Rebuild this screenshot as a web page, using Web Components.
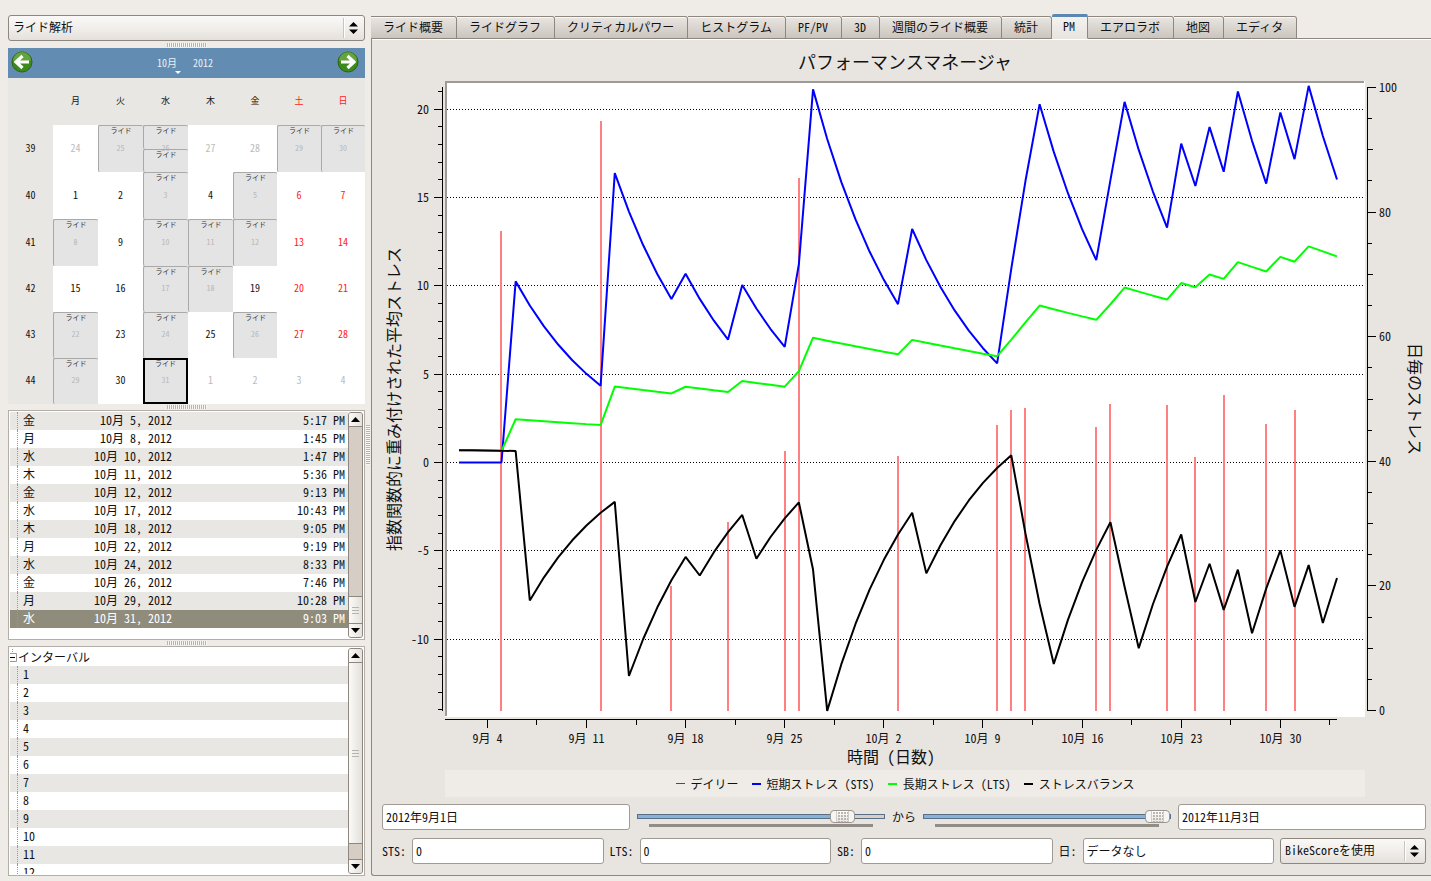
<!DOCTYPE html>
<html lang="ja">
<head>
<meta charset="utf-8">
<title>パフォーマンスマネージャ</title>
<style>
  html, body { margin: 0; height: 100%; }
  body {
    background: #efebe7;
    color: #111;
    font: 12px/18px "Noto Sans CJK JP", sans-serif;
    font-feature-settings: "hwid" 1;
    --edge: #8e8780;
    --soft-edge: #b3aea7;
    --stripe: #e8e7e3;
    --pane: #e8e4e0;
    --blue: #628cb2;
    --select: #908c7c;
  }
</style>
</head>
<body>
<ride-app></ride-app>

<script>
const define = (name, markup, setup) => {
  const template = document.createElement("template");
  template.innerHTML = markup;
  customElements.define(name, class extends HTMLElement {
    connectedCallback() {
      if (this.shadowRoot) return;
      this.attachShadow({ mode: "open" }).append(template.content.cloneNode(true));
      if (setup) setup(this, this.shadowRoot);
    }
  });
};

/* Grip between resizable panes */
define("split-grip", `
<style>
  :host { display: grid; place-items: center; }
  i { display: block; width: 40px; height: 4px; background: repeating-linear-gradient(90deg, #b9b5ae 0 1px, #f8f6f3 1px 2px); }
  :host([vertical]) i { width: 4px; height: 40px; background: repeating-linear-gradient(180deg, #b9b5ae 0 1px, #f8f6f3 1px 2px); }
</style>
<i></i>`);

/* Drop-down */
define("combo-box", `
<style>
  :host { display: grid; height: 26px; }
  select, svg { grid-area: 1 / 1; }
  select {
    appearance: none; box-sizing: border-box; width: 100%; height: 26px; margin: 0; padding: 0 24px 2px 4px;
    border: 1px solid var(--edge); border-radius: 3px; color: inherit;
    background: linear-gradient(#faf9f7, #efece8 60%, #e4e0db);
    font: inherit; font-feature-settings: inherit; line-height: 18px;
  }
  svg { justify-self: end; align-self: center; pointer-events: none; }
</style>
<select><option></option></select>
<svg width="22" height="20" viewBox="0 0 22 20"><path d="M.5 0v20" stroke="#c9c4bd"/><path d="M1.5 0v20" stroke="#fff"/><path d="M6 8.500L10.500 4 15 8.500zM6 11.500L10.500 16 15 11.500z"/></svg>`,
(host, root) => {
  root.querySelector("option").textContent = host.getAttribute("value");
  root.querySelector("select").setAttribute("aria-label", host.getAttribute("label"));
});

/* Text box with an optional caption */
define("text-field", `
<style>
  :host { display: flex; align-items: center; gap: 6px; flex: 1 1 0; min-width: 0; }
  :host([caption]) { flex-basis: auto; }
  label:empty { display: none; }
  label { white-space: nowrap; }
  input {
    box-sizing: border-box; flex: 1; min-width: 0; width: 0; height: 26px; margin: 0; padding: 0 3px 2px;
    border: 1px solid #a09a93; border-radius: 3px; background: #fff; color: inherit;
    font: inherit; font-feature-settings: inherit;
  }
</style>
<label for="box"></label><input id="box" type="text">`,
(host, root) => {
  const input = root.querySelector("input");
  root.querySelector("label").textContent = host.getAttribute("caption") || "";
  if (host.hasAttribute("label")) input.setAttribute("aria-label", host.getAttribute("label"));
  input.value = host.getAttribute("value");
});

/* Range slider with tick band */
define("range-slider", `
<style>
  :host { display: flex; flex-direction: column; flex: 1 1 0; min-width: 0; height: 26px; padding-top: 6px; box-sizing: border-box; }
  input { appearance: none; display: block; flex: none; width: 100%; height: 13px; margin: 0; background: none; }
  input::-webkit-slider-runnable-track {
    box-sizing: border-box; height: 5px; border: 1px solid #5a6f86;
    background: linear-gradient(90deg, #86b3da var(--fill), #d7cfc7 var(--fill));
  }
  input::-webkit-slider-thumb {
    appearance: none; width: 25px; height: 13px; margin-top: -5px; border: 1px solid #9a958f; border-radius: 4px; box-sizing: border-box;
    background:
      linear-gradient(90deg, #f6f5f3 5px, #cfcbc5 5px 6px, transparent 6px 17px, #cfcbc5 17px 18px, #f6f5f3 18px),
      radial-gradient(circle at 1px 1px, #b9b5af 1px, transparent 1px) 7px 1px / 3px 3px,
      linear-gradient(#fff, #e6e3df);
  }
  i { display: block; height: 3px; margin: 1px 12px 0; background: #918c86; }
</style>
<input type="range" min="0" max="100"><i></i>`,
(host, root) => {
  const input = root.querySelector("input");
  input.value = host.getAttribute("value");
  input.setAttribute("aria-label", host.getAttribute("label"));
  const paint = () => input.style.setProperty("--fill", input.value + "%");
  input.addEventListener("input", paint);
  paint();
});

/* Scroll bar beside the lists: "share" splits the trough into before, thumb and after */
define("side-scroll", `
<style>
  :host { display: flex; flex-direction: column; width: 15px; box-sizing: border-box; border: 1px solid var(--edge); border-radius: 3px; background: #d6cdc4; overflow: hidden; }
  button { flex: none; height: 14px; padding: 0; border: 0; background: linear-gradient(90deg, #fbfaf8, #e6e2dd); display: grid; place-items: center; }
  #up { border-bottom: 1px solid var(--edge); }
  #down { border-top: 1px solid var(--edge); }
  #thumb { display: grid; place-content: center; gap: 2px; background: linear-gradient(90deg, #fbfaf8, #e4e0db); }
  :host([mid]) #thumb { border-top: 1px solid var(--edge); }
  :host(:not([mid])) #thumb { border-bottom: 1px solid var(--edge); }
  #thumb i { width: 7px; height: 1px; background: #b9b4ad; }
</style>
<button id="up" aria-label="上へ"><svg width="9" height="5"><path d="M0 5L4.500 0 9 5z"/></svg></button>
<div id="before"></div>
<div id="thumb"><i></i><i></i><i></i></div>
<div id="after"></div>
<button id="down" aria-label="下へ"><svg width="9" height="5"><path d="M0 0L4.500 5 9 0z"/></svg></button>`,
(host, root) => {
  const [before, thumb, after] = host.getAttribute("share").split(" ");
  root.querySelector("#before").style.flex = before + " 1 0";
  root.querySelector("#thumb").style.flex = thumb + " 1 0";
  root.querySelector("#after").style.flex = after + " 1 0";
});

/* Framed list */
define("list-frame", `
<style>
  :host { display: flex; box-sizing: border-box; min-height: 0; padding: 1px; border: 1px solid var(--soft-edge); background: #fff; }
  #rows { flex: 1; min-width: 0; overflow: hidden; }
</style>
<div id="rows"><slot></slot></div><slot name="scroll"></slot>`);

define("ride-rows", `
<style>
  :host { display: block; }
  table { width: 100%; border-collapse: collapse; table-layout: fixed; }
  tr { height: 18px; }
  tr:nth-child(odd) { background: var(--stripe); }
  tr[aria-selected] { background: var(--select); color: #fff; }
  td { padding: 0 0 2px; line-height: 16px; white-space: nowrap; text-align: right; }
  td:first-child { width: 40px; padding: 0; text-align: left; }
  td:first-child span { display: block; margin-left: 7px; padding: 0 0 2px 5px; border-left: 1px dotted #999; }
  td:nth-child(2) { width: 122px; }
  td:last-child { padding-right: 3px; }
</style>
<table><tbody></tbody></table>`,
(host, root) => {
  const rides = [
    ["金", "5", "5:17"], ["月", "8", "1:45"], ["水", "10", "1:47"], ["木", "11", "5:36"],
    ["金", "12", "9:13"], ["水", "17", "10:43"], ["木", "18", "9:05"], ["月", "22", "9:19"],
    ["水", "24", "8:33"], ["金", "26", "7:46"], ["月", "29", "10:28"], ["水", "31", "9:03"]
  ];
  root.querySelector("tbody").innerHTML = rides.map(([w, d, t], i) =>
    `<tr${i === 11 ? ' aria-selected="true"' : ""}><td><span>${w}</span></td><td>10月 ${d}, 2012</td><td>${t} PM</td></tr>`).join("");
});

define("interval-rows", `
<style>
  :host { display: block; }
  .head { display: flex; align-items: center; height: 18px; }
  .head svg { flex: none; }
  ul { list-style: none; margin: 0; padding: 0; }
  li { height: 18px; line-height: 16px; }
  li:nth-child(odd) { background: var(--stripe); }
  li span { display: block; margin-left: 7px; padding: 0 0 2px 5px; border-left: 1px dotted #999; }
</style>
<div class="head"><svg width="8" height="18"><path d="M2.500 1v4" stroke="#999" stroke-dasharray="1 1"/><path d="M0 5.500h6.500v8H0" fill="none" stroke="#999"/><path d="M0 9.500h5" stroke="#000"/></svg>インターバル</div>
<ul></ul>`,
(host, root) => {
  root.querySelector("ul").innerHTML = Array.from({ length: 12 }, (_, i) => `<li><span>${i + 1}</span></li>`).join("");
});

/* Month calendar */
define("ride-calendar", `
<style>
  :host { display: block; font-size: 10px; line-height: 12px; }
  header { display: flex; align-items: center; justify-content: space-between; height: 30px; padding: 0 6px 2px 3px; box-sizing: border-box; background: var(--blue); color: #e9f0f6; }
  button { width: 22px; height: 22px; padding: 0; border: 0; background: none; }
  button svg { display: block; }
  .month { display: grid; row-gap: 2px; padding-top: 6px; }
  .month div { display: flex; gap: 16px; }
  .month svg { margin-left: 18px; }
  table { width: 100%; table-layout: fixed; border-collapse: collapse; background: #fff; }
  tr { height: 46px; }
  thead tr, tr.tall { height: 47px; }
  th, td { padding: 0 0 2px; text-align: center; font-weight: 400; }
  th { background: var(--stripe); }
  thead th { font-size: 9px; }
  thead th:nth-child(-n+5) { width: 45px; }
  .off { color: #ff2020; }
  .dim { color: #bbb; }
  .ride { position: relative; background: #e4e4e4; color: #b8b8b8; font-size: 8px; }
  .ride > div { position: absolute; inset: 0; display: flex; flex-direction: column; color: #333; font-size: 7px; line-height: 8px; }
  .ride > div span { flex: 1; border: 1px solid #a9a9a9; border-width: 1px 0 0 1px; border-radius: 2px 2px 0 2px; }
  .ride.now > div { border: 2px solid #000; }
  .ride.now > div span { border: 0; line-height: 7px; }
</style>
<header>
  <button aria-label="前の月"><svg width="22" height="22" viewBox="0 0 22 22"><circle cx="11" cy="11" r="10" fill="#3d8a1c" stroke="#2c6415"/><path d="M2 9.500a9 8.500 0 0 1 18 0q-9 4-18 0z" fill="#7db552" opacity=".6"/><path d="M11.500 5L5 11l6.500 6M6 11h12" fill="none" stroke="#fff" stroke-width="3.200"/></svg></button>
  <div class="month"><div><span>10月</span><span>2012</span></div><svg width="6" height="3"><path d="M0 0h6L3 3z" fill="#fff"/></svg></div>
  <button aria-label="次の月"><svg width="22" height="22" viewBox="0 0 22 22"><circle cx="11" cy="11" r="10" fill="#3d8a1c" stroke="#2c6415"/><path d="M2 9.500a9 8.500 0 0 1 18 0q-9 4-18 0z" fill="#7db552" opacity=".6"/><path d="M10.500 5L17 11l-6.500 6M16 11H4" fill="none" stroke="#fff" stroke-width="3.200"/></svg></button>
</header>
<table><thead><tr><th></th><th>月</th><th>火</th><th>水</th><th>木</th><th>金</th><th class="off">土</th><th class="off">日</th></tr></thead><tbody></tbody></table>`,
(host, root) => {
  const weeks = [
    [39, "24d 25r 26rr 27d 28d 29r 30r"], [40, "1 2 3r 4 5r 6 7"], [41, "8r 9 10r 11r 12r 13 14"],
    [42, "15 16 17r 18r 19 20 21"], [43, "22r 23 24r 25 26r 27 28"], [44, "29r 30 31rn 1d 2d 3d 4d"]
  ];
  root.querySelector("tbody").innerHTML = weeks.map(([n, days], w) =>
    `<tr${w < 3 ? ' class="tall"' : ""}><th>${n}</th>` + days.split(" ").map((s, i) => {
      const day = parseInt(s), rides = s.split("r").length - 1;
      const kind = rides ? "ride" + (s.endsWith("n") ? " now" : "") : s.endsWith("d") ? "dim" : i > 4 ? "off" : "";
      return `<td class="${kind}">${day}${rides ? "<div>" + "<span>ライド</span>".repeat(rides) + "</div>" : ""}</td>`;
    }).join("") + "</tr>").join("");
});

/* Tabs */
define("view-tabs", `
<style>
  :host { display: flex; align-items: flex-end; height: 25px; }
  button {
    height: 23px; margin: 0; padding: 0 13px 1px 12px; white-space: nowrap; color: inherit;
    border: 1px solid var(--edge); border-left: 0; border-radius: 0 3px 0 0; box-shadow: inset 0 1px #faf8f6;
    background: linear-gradient(#e9e5e1, #cbc5be); font: inherit; font-feature-settings: inherit;
  }
  button:first-child { border-left: 1px solid var(--edge); border-radius: 3px 3px 0 0; }
  button[aria-selected="true"] {
    height: 25px; padding: 0 12px 3px 11px; border-top: 3px solid #5b88b0; border-bottom-color: var(--pane); border-radius: 2px 2px 0 0;
    background: linear-gradient(#f4f2ef, var(--pane)); box-shadow: none;
  }
</style>`,
(host, root) => {
  const names = ["ライド概要", "ライドグラフ", "クリティカルパワー", "ヒストグラム", "PF/PV", "3D", "週間のライド概要", "統計", "PM", "エアロラボ", "地図", "エディタ"];
  host.setAttribute("role", "tablist");
  for (const name of names) {
    const tab = document.createElement("button");
    tab.setAttribute("role", "tab");
    tab.setAttribute("aria-selected", name === "PM");
    tab.textContent = name;
    root.append(tab);
  }
});

/* Performance manager chart: curves follow from the daily stress scores */
define("stress-chart", `
<style>
  :host { display: block; min-height: 0; overflow: hidden; }
  svg { display: block; }
  text { fill: #111; text-anchor: middle; }
  .title { font-size: 18px; }
  .axis { font-size: 16px; }
  .end { text-anchor: end; }
  .start { text-anchor: start; }
  .crisp { shape-rendering: crispEdges; stroke: #000; fill: none; }
  .grid { stroke-dasharray: 1 2; }
  .curve { fill: none; stroke-width: 2; stroke-linejoin: bevel; }
</style>
<svg role="img" aria-label="パフォーマンスマネージャ"></svg>`,
(host, root) => {
  const svg = root.querySelector("svg");
  const scores = { 3: 77, 10: 94.7, 15: 20, 19: 30.2, 23: 41.7, 24: 85.5, 31: 40.9, 38: 45.9, 39: 48.2, 40: 48.6, 45: 45.5, 46: 49.2, 50: 49, 52: 40.7, 54: 50.6, 57: 46, 59: 48.3 };
  const lastDay = 62, sts = [0], lts = [0.7], sb = [0.7];
  for (let d = 0; d < lastDay; d++) {
    const score = scores[d] || 0;
    sts.push(sts[d] + (score - sts[d]) * (1 - Math.exp(-1 / 7)));
    lts.push(lts[d] + (score - lts[d]) * (1 - Math.exp(-1 / 42)));
    sb.push(lts[d] - sts[d]);
  }
  const draw = () => {
    const W = host.clientWidth, H = host.clientHeight;
    if (!W || !H) return;
    const L = 73, T = 42, R = W - 66, B = H - 53;
    const top = T + 6.5, bottom = B - 6.5;
    const x = d => L + 14 + d * (R - L - 42) / lastDay;
    const y = v => bottom - (v + 14.03) / 35.25 * (bottom - top);
    const y2 = v => bottom - v / 100 * (bottom - top);
    const mid = v => Math.floor(v) + 0.5;
    const line = (x1, y1, x2, y2) => `M${x1} ${y1}L${x2} ${y2}`;
    const text = (s, px, py, cls = "", extra = "") => `<text class="${cls}" x="${px}" y="${py}" ${extra}>${s}</text>`;
    const curve = (values, colour) => `<polyline class="curve" stroke="${colour}" points="${values.map((v, d) => x(d) + "," + y(v)).join(" ")}"/>`;
    let grid = "", ticks = "", labels = "", bars = "";

    ticks += line(L - 2.5, T + 6, L - 2.5, B - 6);
    for (let v = -14; v <= 21; v++) {
      const py = mid(y(v)), major = v % 5 === 0;
      ticks += line(L - (major ? 11 : 7), py, L - 2, py);
      if (major) {
        grid += line(L + 2, py, R - 1, py);
        labels += text(v, L - 16, py + 4, "end");
      }
    }
    ticks += line(R + 2.5, T + 6, R + 2.5, B - 6);
    for (let v = 0; v <= 100; v += 5) {
      const py = mid(y2(v)), major = v % 20 === 0;
      ticks += line(R + 2, py, R + (major ? 11 : v % 10 ? 7 : 8), py);
      if (major) labels += text(v, R + 14, py + 4, "start");
    }
    ticks += line(L, B + 2.5, x(lastDay), B + 2.5);
    ["9月 4", "9月 11", "9月 18", "9月 25", "10月 2", "10月 9", "10月 16", "10月 23", "10月 30"].forEach((name, i) => {
      const px = mid(x(2 + i * 7)), half = mid(x(5.5 + i * 7));
      ticks += line(px, B + 2, px, B + 11) + line(half, B + 2, half, B + 8);
      labels += text(name, px, B + 26);
    });
    for (const d in scores) bars += line(x(+d), bottom + 0.5, x(+d), y2(scores[d]));

    svg.setAttribute("width", W);
    svg.setAttribute("height", H);
    const cy = (T + B) / 2;
    svg.innerHTML =
      `<rect x="${L}" y="${T}" width="${R - L}" height="${B - T}" fill="#fff"/>
       <path d="M${L + 1} ${B - 1}V${T + 1}H${R - 1}" fill="none" stroke="#9e9b96" stroke-width="2"/>
       <path class="crisp grid" d="${grid}"/>
       <path d="${bars}" stroke="#ff8080" stroke-width="2" shape-rendering="crispEdges"/>
       ${curve(sts, "#00f")}${curve(lts, "#0f0")}${curve(sb, "#000")}
       <path class="crisp" d="${ticks}"/>${labels}` +
      text("パフォーマンスマネージャ", (L + R) / 2, T - 12, "title") +
      text("時間 (日数)", (L + x(lastDay)) / 2, B + 46, "axis") +
      text("指数関数的に重み付けされた平均ストレス", 28, cy, "axis", `transform="rotate(-90 28 ${cy})"`) +
      text("日毎のストレス", R + 44, cy, "axis", `transform="rotate(90 ${R + 44} ${cy})"`);
  };
  new ResizeObserver(draw).observe(host);
  draw();
});

define("chart-legend", `
<style>
  :host { display: flex; justify-content: center; align-items: center; gap: 13px; height: 27px; background: #efebe6; }
  span { display: flex; align-items: center; gap: 6px; white-space: nowrap; }
  i { width: 9px; height: 2px; background: #000; }
  .daily { height: 1px; background: #f00; }
  .sts { background: #00f; }
  .lts { background: #0f0; }
</style>
<span><i class="daily"></i>デイリー</span><span><i class="sts"></i>短期ストレス (STS)</span><span><i class="lts"></i>長期ストレス (LTS)</span><span><i></i>ストレスバランス</span>`);

define("ride-app", `
<style>
  :host { display: grid; grid-template-columns: 357px 6px minmax(0, 1fr); height: 100vh; min-height: 700px; box-sizing: border-box; padding: 14px 0 5px 8px; }
  aside { display: flex; flex-direction: column; min-height: 0; padding-top: 1px; }
  aside combo-box, aside ride-calendar { flex: none; }
  aside split-grip { flex: none; height: 6px; }
  aside combo-box + split-grip { height: 7px; }
  list-frame { flex: 1 1 0; }
  main { display: flex; flex-direction: column; min-width: 0; min-height: 0; }
  view-tabs { z-index: 1; }
  section { flex: 1; min-height: 0; display: flex; flex-direction: column; margin-top: -1px; border: 1px solid var(--edge); border-right: 0; border-radius: 0 0 0 3px; box-shadow: inset 0 1px #fff; background: var(--pane); }
  stress-chart { flex: 1 1 0; }
  chart-legend { margin: 0 66px 0 73px; }
  .row { display: flex; align-items: center; gap: 7px; padding: 0 5px 0 10px; margin-top: 7px; }
  .fields { gap: 6px; margin: 8px 0 11px; }
  .fields combo-box { width: 146px; flex: none; }
</style>
<aside>
  <combo-box label="表示" value="ライド解析"></combo-box>
  <split-grip></split-grip>
  <ride-calendar></ride-calendar>
  <split-grip></split-grip>
  <list-frame><ride-rows></ride-rows><side-scroll slot="scroll" share="170 26 0" mid></side-scroll></list-frame>
  <split-grip></split-grip>
  <list-frame><interval-rows></interval-rows><side-scroll slot="scroll" share="0 181 15"></side-scroll></list-frame>
</aside>
<split-grip vertical></split-grip>
<main>
  <view-tabs></view-tabs>
  <section>
    <stress-chart></stress-chart>
    <chart-legend></chart-legend>
    <div class="row">
      <text-field label="開始日" value="2012年9月1日"></text-field>
      <range-slider label="開始" value="87"></range-slider>
      <span>から</span>
      <range-slider label="終了" value="100"></range-slider>
      <text-field label="終了日" value="2012年11月3日"></text-field>
    </div>
    <div class="row fields">
      <text-field caption="STS:" value="0"></text-field>
      <text-field caption="LTS:" value="0"></text-field>
      <text-field caption="SB:" value="0"></text-field>
      <text-field caption="日:" value="データなし"></text-field>
      <combo-box label="スコア" value="BikeScoreを使用"></combo-box>
    </div>
  </section>
</main>`);
</script>
</body>
</html>
